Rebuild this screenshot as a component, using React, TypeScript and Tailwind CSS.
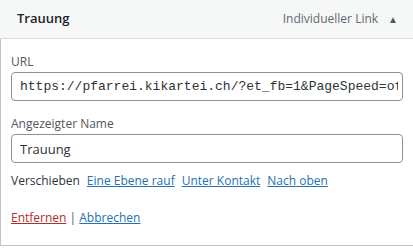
import React from 'react';

const font = { fontFamily: '"Open Sans", "Noto Sans", sans-serif' };

function Field({ label, value, mono }: { label: string; value: string; mono?: boolean }) {
  return (
    <div className="flex flex-col">
      <label className="text-[12px] leading-[20px] text-[#50575e]">{label}</label>
      <input
        readOnly
        value={value}
        className={
          mono
            ? "h-[29px] w-full rounded-[4px] border border-[#8c8f94] bg-white pl-[8px] pr-[4px] outline-none text-[13px] text-[#2c3338] font-['Liberation_Mono',monospace]"
            : 'h-[29px] w-full rounded-[4px] border border-[#8c8f94] bg-white pl-[8px] pr-[4px] outline-none text-[13px] text-[#2c3338]'
        }
      />
    </div>
  );
}

export default function App() {
  return (
    <div className="w-[413px] h-[248px] bg-white overflow-hidden" style={font}>
      <div className="h-[39px] bg-[#f6f7f7] border-b border-[#dcdcde] flex items-center pl-[17px] pr-[15px]">
        <span className="text-[13px] font-semibold text-[#1d2327] flex-1">Trauung</span>
        <span className="text-[12px] text-[#646970]">Individueller Link</span>
        <span className="ml-[10px] text-[10px] text-[#50575e]">▲</span>
      </div>
      <div className="h-[207px] border-l border-b border-[#c3c4c7] pl-[10px] pr-[10px] pt-[13px] flex flex-col">
        <Field label="URL" value="https://pfarrei.kikartei.ch/?et_fb=1&PageSpeed=off" mono />
        <div className="mt-[13px]">
          <Field label="Angezeigter Name" value="Trauung" />
        </div>
        <div className="mt-[8px] flex gap-[7px] text-[12px] leading-[20px] text-[#2c3338]">
          <span>Verschieben</span>
          <a className="text-[#2271b1] underline">Eine Ebene rauf</a>
          <a className="text-[#2271b1] underline">Unter Kontakt</a>
          <a className="text-[#2271b1] underline">Nach oben</a>
        </div>
        <div className="mt-[17px] text-[12px] leading-[20px] text-[#50575e]">
          <a className="text-[#b32d2e] underline">Entfernen</a>
          <span> | </span>
          <a className="text-[#2271b1] underline">Abbrechen</a>
        </div>
      </div>
    </div>
  );
}
